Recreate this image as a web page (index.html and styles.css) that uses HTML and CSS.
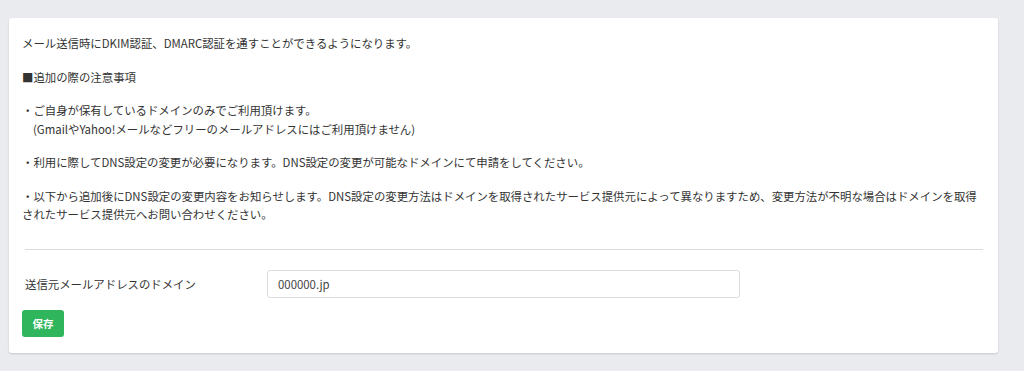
FILE: index.html
```html
<!DOCTYPE html>
<html lang="ja">
<head>
    <meta charset="UTF-8">
    <meta name="viewport" content="width=device-width, initial-scale=1.0">
    <title>DKIM設定</title>
    <link rel="stylesheet" href="styles.css">
</head>
<body>
    <div class="card">
        <div class="notes">
            <p>メール送信時にDKIM認証、DMARC認証を通すことができるようになります。</p>
            <p>■追加の際の注意事項</p>
            <p>・ご自身が保有しているドメインのみでご利用頂けます。<br>
            <span class="indent">(GmailやYahoo!メールなどフリーのメールアドレスにはご利用頂けません)</span></p>
            <p>・利用に際してDNS設定の変更が必要になります。DNS設定の変更が可能なドメインにて申請をしてください。</p>
            <p>・以下から追加後にDNS設定の変更内容をお知らせします。DNS設定の変更方法はドメインを取得されたサービス提供元によって異なりますため、変更方法が不明な場合はドメインを取得されたサービス提供元へお問い合わせください。</p>
        </div>

        <hr class="divider">

        <form class="domain-form" onsubmit="return false;">
            <div class="form-row">
                <label for="domain">送信元メールアドレスのドメイン</label>
                <input type="text" id="domain" value="000000.jp">
            </div>
            <button type="submit" class="btn-save">保存</button>
        </form>
    </div>
</body>
</html>
```

FILE: styles.css
```css
body {
    margin: 0;
    padding: 18px 26px 17px 9px;
    background-color: #e9ebee;
    font-family: "Noto Sans CJK JP", "Noto Sans", sans-serif;
    font-size: 11.4px;
    color: #333;
}
.card {
    background: white;
    border-radius: 3px;
    box-shadow: 0 1px 2px rgba(0, 0, 0, 0.15);
    padding: 16px 13px 16px 13px;
}
.notes p {
    margin: 0 0 15px;
    line-height: 18.5px;
}
.notes p:last-child {
    margin-bottom: 0;
}
.indent {
    padding-left: 11px;
}
.divider {
    border: none;
    border-top: 1px solid #dcdcdc;
    margin: 25px 2px 20px 3px;
}
.form-row {
    display: flex;
    align-items: center;
}
.form-row label {
    width: 242px;
    padding-left: 3px;
}
.form-row input {
    width: 473px;
    height: 28px;
    box-sizing: border-box;
    border: 1px solid #ddd;
    border-radius: 3px;
    padding: 0 10px;
    font-family: inherit;
    font-size: 11.4px;
    color: #444;
}
.btn-save {
    margin-top: 12px;
    width: 42px;
    height: 27px;
    border: none;
    border-radius: 3px;
    background-color: #2fb55b;
    color: white;
    font-family: inherit;
    font-size: 10.5px;
    font-weight: bold;
    cursor: pointer;
}
```
